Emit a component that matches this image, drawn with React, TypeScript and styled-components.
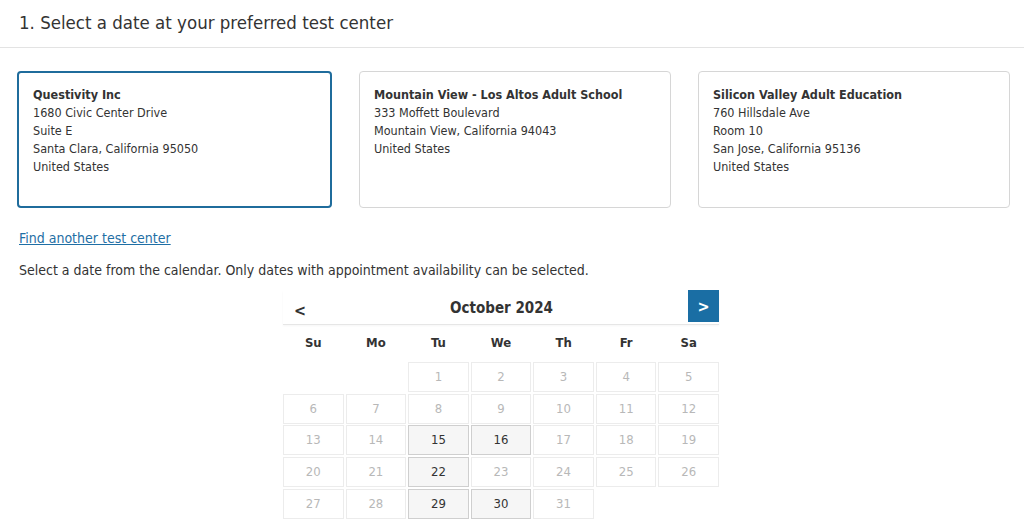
import * as React from 'react'
import styled, { createGlobalStyle, css } from 'styled-components'

const Global = createGlobalStyle`
  body {
    margin: 0;
    background: #fff;
    font-family: "DejaVu Sans Condensed", "DejaVu Sans", sans-serif;
    color: #333;
  }
`

const Page = styled.div`
  width: 1024px;
`

const Heading = styled.h2`
  margin: 0;
  padding: 11px 19px 12px;
  font-size: 18.5px;
  font-weight: normal;
  line-height: 24px;
  color: #333;
  border-bottom: 1px solid #e3e3e3;
`

const Body = styled.div`
  padding: 23px 14px 0 17px;
`

const Centers = styled.div`
  display: grid;
  grid-template-columns: 315px 312px 312px;
  column-gap: 27px;
  margin-bottom: 20px;
`

const Card = styled.div<{ $active?: boolean }>`
  box-sizing: border-box;
  height: 137px;
  border-radius: 4px;
  font-size: 12.5px;
  line-height: 18px;
  color: #333;
  ${(p) =>
    p.$active
      ? css`
          border: 2px solid #1f6c9c;
          padding: 13px 14px;
        `
      : css`
          border: 1px solid #d6d6d6;
          padding: 14px 14px;
        `}
`

const CardTitle = styled.div`
  font-weight: bold;
`

const FindLink = styled.a`
  display: inline-block;
  margin-left: 2px;
  font-size: 14px;
  line-height: 18px;
  color: #1f6fa5;
  text-decoration: underline;
  cursor: pointer;
`

const Hint = styled.p`
  margin: 14px 0 0 2px;
  font-size: 14px;
  line-height: 18px;
  color: #333;
`

const Calendar = styled.div`
  width: 436px;
  margin: 12px 0 0 266px;
`

const CalHeader = styled.div`
  display: flex;
  align-items: center;
  height: 33px;
  border-bottom: 1px solid #e6e6e6;
  box-shadow: 0 1px 2px rgba(0, 0, 0, 0.04);
`

const NavPrev = styled.span`
  width: 32px;
  padding-left: 11px;
  box-sizing: border-box;
  font-size: 16px;
  font-weight: bold;
  color: #333;
  margin-top: 5px;
`

const Month = styled.div`
  flex: 1;
  text-align: center;
  font-size: 15px;
  font-weight: bold;
  color: #333;
  margin-top: 1px;
`

const NavNext = styled.span`
  display: flex;
  align-items: center;
  justify-content: center;
  width: 31px;
  height: 32px;
  align-self: flex-start;
  margin-top: -1px;
  background: #1a6ea4;
  color: #fff;
  font-size: 16px;
  font-weight: bold;
`

const Grid = styled.div`
  display: grid;
  grid-template-columns: repeat(7, 1fr);
  column-gap: 2px;
  row-gap: 1.75px;
`

const WeekDay = styled.div`
  height: 35px;
  line-height: 35px;
  text-align: center;
  font-size: 13px;
  font-weight: bold;
  color: #333;
`

const Day = styled.div<{ $open?: boolean }>`
  box-sizing: border-box;
  height: 30px;
  line-height: 28px;
  text-align: center;
  font-size: 13px;
  ${(p) =>
    p.$open
      ? css`
          border: 1px solid #cfcfcf;
          background: #f6f6f6;
          color: #333;
        `
      : css`
          border: 1px solid #ececec;
          background: #fff;
          color: #b8b8b8;
        `}
`

const Blank = styled.div``

const centers = [
  {
    name: 'Questivity Inc',
    lines: ['1680 Civic Center Drive', 'Suite E', 'Santa Clara, California 95050', 'United States'],
    active: true,
  },
  {
    name: 'Mountain View - Los Altos Adult School',
    lines: ['333 Moffett Boulevard', 'Mountain View, California 94043', 'United States'],
  },
  {
    name: 'Silicon Valley Adult Education',
    lines: ['760 Hillsdale Ave', 'Room 10', 'San Jose, California 95136', 'United States'],
  },
]

const weekDays = ['Su', 'Mo', 'Tu', 'We', 'Th', 'Fr', 'Sa']
const openDays = [15, 16, 22, 29, 30]

export default function App() {
  const cells: React.ReactNode[] = []
  for (let i = 0; i < 2; i++) cells.push(<Blank key={'b' + i} />)
  for (let d = 1; d <= 31; d++) {
    cells.push(
      <Day key={d} $open={openDays.includes(d)}>
        {d}
      </Day>
    )
  }

  return (
    <Page>
      <Global />
      <Heading>1. Select a date at your preferred test center</Heading>
      <Body>
        <Centers>
          {centers.map((c) => (
            <Card key={c.name} $active={c.active}>
              <CardTitle>{c.name}</CardTitle>
              {c.lines.map((l) => (
                <div key={l}>{l}</div>
              ))}
            </Card>
          ))}
        </Centers>
        <FindLink>Find another test center</FindLink>
        <Hint>Select a date from the calendar. Only dates with appointment availability can be selected.</Hint>
        <Calendar>
          <CalHeader>
            <NavPrev>&lt;</NavPrev>
            <Month>October 2024</Month>
            <NavNext>&gt;</NavNext>
          </CalHeader>
          <Grid>
            {weekDays.map((w) => (
              <WeekDay key={w}>{w}</WeekDay>
            ))}
            {cells}
          </Grid>
        </Calendar>
      </Body>
    </Page>
  )
}
